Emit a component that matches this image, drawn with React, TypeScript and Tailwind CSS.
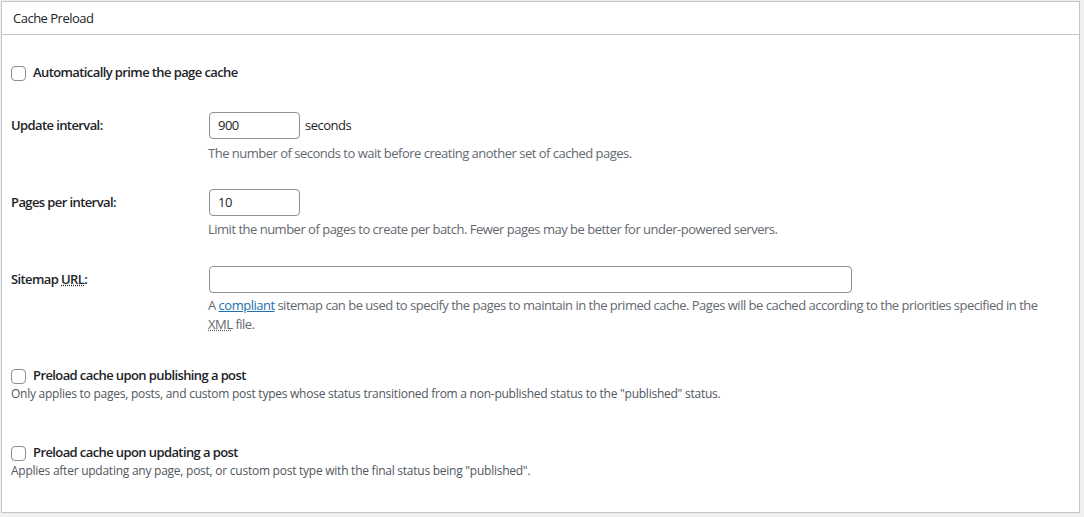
import React from "react";

const font = { fontFamily: '"Open Sans", "Noto Sans", sans-serif' };

function Checkbox() {
  return (
    <span className="inline-block w-[15px] h-[15px] rounded-[4px] border border-[#8c8f94] bg-white shrink-0" />
  );
}

export default function App() {
  return (
    <div className="w-[1084px] h-[517px] bg-[#f0f0f1] pt-[1px] pl-[1px]" style={font}>
      <div className="w-[1079px] h-[512px] border border-[#c3c4c7] bg-white text-[13px] tracking-[-0.5px] text-[#1d2327]">
        <div className="h-[33px] border-b border-[#c3c4c7] pl-[11px] pt-[2px] flex items-center">
          <span className="text-[13px]">Cache Preload</span>
        </div>
        <div className="pl-[9px]">
          <label className="mt-[28px] h-[20px] flex items-center gap-[7px]">
            <Checkbox />
            <span className="font-semibold tracking-[-0.6px]">Automatically prime the page cache</span>
          </label>

          <div className="mt-[29px] flex items-center">
            <div className="w-[198px] font-semibold tracking-[-0.6px]">Update interval:</div>
            <div className="w-[91px] h-[27px] rounded-[4px] border border-[#8c8f94] px-[8px] flex items-center">900</div>
            <span className="ml-[5px]">seconds</span>
          </div>
          <div className="mt-[4px] ml-[197px] leading-[20px] text-[#646970]">
            The number of seconds to wait before creating another set of cached pages.
          </div>

          <div className="mt-[26px] flex items-center">
            <div className="w-[198px] font-semibold tracking-[-0.6px]">Pages per interval:</div>
            <div className="w-[91px] h-[27px] rounded-[4px] border border-[#8c8f94] px-[8px] flex items-center">10</div>
          </div>
          <div className="mt-[3px] ml-[197px] leading-[20px] text-[#646970]">
            Limit the number of pages to create per batch. Fewer pages may be better for under-powered servers.
          </div>

          <div className="mt-[27px] flex items-center">
            <div className="w-[198px] font-semibold tracking-[-0.6px]">
              Sitemap <abbr className="underline decoration-dotted">URL</abbr>:
            </div>
            <div className="w-[643px] h-[27px] rounded-[4px] border border-[#8c8f94]" />
          </div>
          <div className="mt-[3px] ml-[197px] pr-[28px] leading-[19px] text-[#646970]">
            A <a className="text-[#2271b1] underline">compliant</a> sitemap can be used to specify the pages to maintain in the primed cache. Pages will be cached according to the priorities specified in the{" "}
            <abbr className="underline decoration-dotted">XML</abbr> file.
          </div>

          <label className="mt-[32px] h-[20px] flex items-center gap-[7px]">
            <Checkbox />
            <span className="font-semibold tracking-[-0.6px]">Preload cache upon publishing a post</span>
          </label>
          <div className="text-[12px] leading-[16px] tracking-[-0.25px] text-[#50575e]">
            Only applies to pages, posts, and custom post types whose status transitioned from a non-published status to the "published" status.
          </div>

          <label className="mt-[41px] h-[20px] flex items-center gap-[7px]">
            <Checkbox />
            <span className="font-semibold tracking-[-0.6px]">Preload cache upon updating a post</span>
          </label>
          <div className="text-[12px] leading-[16px] tracking-[-0.25px] text-[#50575e]">
            Applies after updating any page, post, or custom post type with the final status being "published".
          </div>
        </div>
      </div>
    </div>
  );
}
